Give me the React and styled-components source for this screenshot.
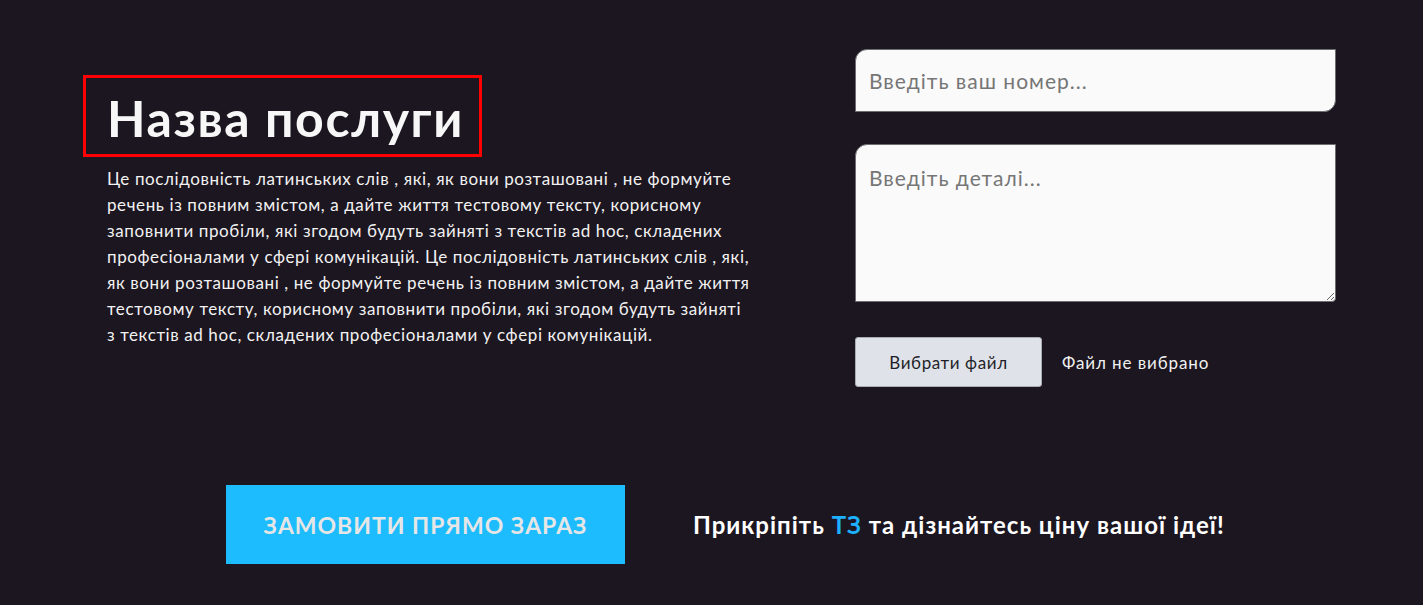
import React from "react";
import styled, { createGlobalStyle } from "styled-components";

const Global = createGlobalStyle`
  html, body { margin: 0; padding: 0; background: #1c1620; }
  body { font-family: "Lato", "Open Sans", sans-serif; }
  * { box-sizing: border-box; }
`;

const Page = styled.main`
  min-height: 605px;
  background: #1c1620;
  padding: 49px 87px 0 83px;
`;

const Top = styled.section`
  display: grid;
  grid-template-columns: 1fr 481px;
  column-gap: 60px;
`;

const Left = styled.div`
  padding-top: 26px;
`;

const TitleBox = styled.div`
  display: inline-block;
  border: 3px solid #ff0000;
  width: 399px;
  height: 82px;
  padding: 10px 0 0 21px;
`;

const Title = styled.h1`
  margin: 0;
  font-family: "Lato", sans-serif;
  font-weight: 700;
  font-size: 50px;
  line-height: 60px;
  color: #f7f7f7;
  letter-spacing: 1.6px;
`;

const Text = styled.p`
  margin: 9px 0 0 24px;
  width: 645px;
  font-family: "Lato", sans-serif;
  font-size: 17px;
  line-height: 26px;
  color: #f2f2f2;
  letter-spacing: 0.6px;
`;

const Form = styled.form`
  display: flex;
  flex-direction: column;
`;

const fieldBase = `
  width: 481px;
  background: #fafafa;
  border: 1px solid #6d6d72;
  border-radius: 12px 0 12px 0;
  font-family: "Lato", sans-serif;
  font-size: 21px;
  letter-spacing: 1px;
  color: #222;
  padding: 0 13px;
  outline: none;
  &::placeholder { color: #767676; }
`;

const Input = styled.input`
  ${fieldBase}
  height: 63px;
`;

const Area = styled.textarea`
  ${fieldBase}
  margin-top: 32px;
  height: 158px;
  padding-top: 20px;
  resize: vertical;
  border-radius: 12px 0 4px 0;
`;

const FileRow = styled.label`
  margin-top: 35px;
  display: flex;
  align-items: center;
  gap: 20px;
  cursor: pointer;
`;

const FileButton = styled.span`
  width: 187px;
  height: 50px;
  background: #dfe2e8;
  border: 1px solid #a9acb3;
  border-radius: 3px;
  display: flex;
  align-items: center;
  justify-content: center;
  font-family: "Lato", sans-serif;
  font-size: 17px;
  letter-spacing: 0.6px;
  color: #1f1f2a;
`;

const FileName = styled.span`
  font-family: "Lato", sans-serif;
  font-size: 17px;
  letter-spacing: 0.9px;
  color: #f0f0f0;
`;

const Hidden = styled.input`
  display: none;
`;

const Bottom = styled.section`
  margin-top: 98px;
  display: flex;
  align-items: center;
  padding-left: 143px;
  gap: 68px;
`;

const OrderButton = styled.button`
  width: 399px;
  height: 79px;
  border: none;
  background: #1cbcfe;
  color: #e6e6e6;
  font-family: "Lato", sans-serif;
  font-weight: 700;
  font-size: 23px;
  text-transform: uppercase;
  letter-spacing: 1px;
  cursor: pointer;
`;

const Promo = styled.p`
  margin: 0;
  font-family: "Lato", sans-serif;
  font-weight: 700;
  font-size: 24px;
  letter-spacing: 1px;
  color: #ffffff;
`;

const Accent = styled.span`
  color: #1cb0ff;
`;

export default function App() {
  return (
    <>
      <Global />
      <Page>
        <Top>
          <Left>
            <TitleBox>
              <Title>Назва послуги</Title>
            </TitleBox>
            <Text>
              Це послідовність латинських слів , які, як вони розташовані , не формуйте
              речень із повним змістом, а дайте життя тестовому тексту, корисному
              заповнити пробіли, які згодом будуть зайняті з текстів ad hoc, складених
              професіоналами у сфері комунікацій. Це послідовність латинських слів , які,
              як вони розташовані , не формуйте речень із повним змістом, а дайте життя
              тестовому тексту, корисному заповнити пробіли, які згодом будуть зайняті
              з текстів ad hoc, складених професіоналами у сфері комунікацій.
            </Text>
          </Left>
          <Form onSubmit={(e) => e.preventDefault()}>
            <Input type="tel" placeholder="Введіть ваш номер..." />
            <Area placeholder="Введіть деталі..." />
            <FileRow>
              <Hidden type="file" />
              <FileButton>Вибрати файл</FileButton>
              <FileName>Файл не вибрано</FileName>
            </FileRow>
          </Form>
        </Top>
        <Bottom>
          <OrderButton type="button">Замовити прямо зараз</OrderButton>
          <Promo>
            Прикріпіть <Accent>ТЗ</Accent> та дізнайтесь ціну вашої ідеї!
          </Promo>
        </Bottom>
      </Page>
    </>
  );
}
